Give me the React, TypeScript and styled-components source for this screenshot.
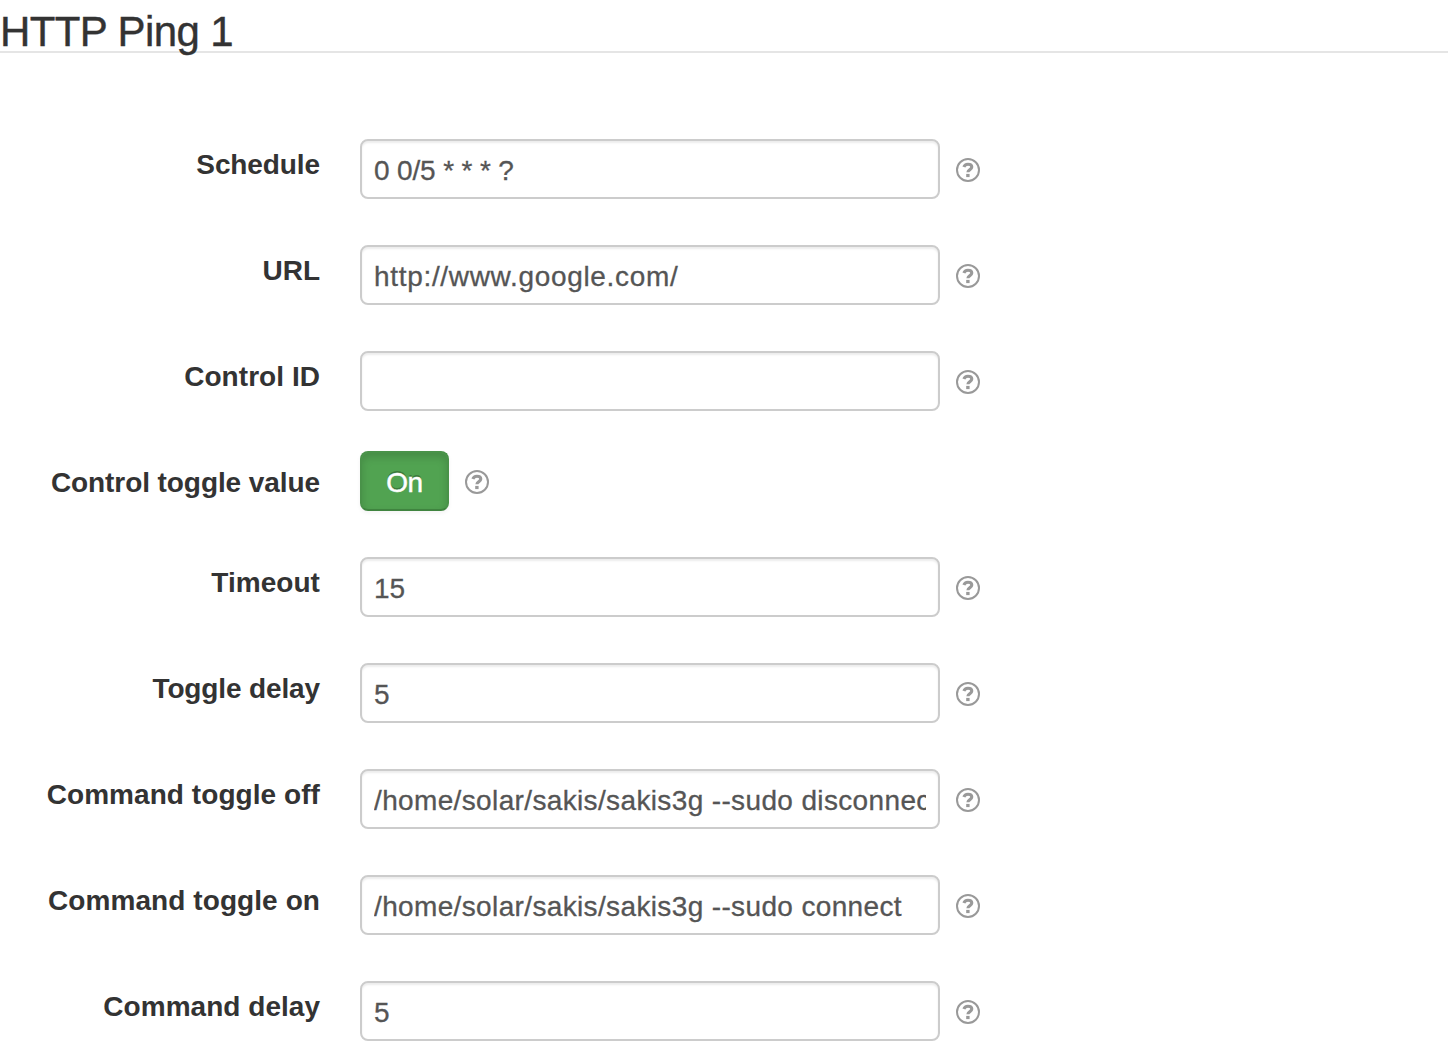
import React from "react";
import styled, { createGlobalStyle } from "styled-components";

const GlobalStyle = createGlobalStyle`
  * { box-sizing: border-box; }
  body {
    margin: 0;
    background: #fff;
    overflow: hidden;
    font-family: "Liberation Sans", Arial, sans-serif;
    color: #333;
  }
`;

const Page = styled.main`
  width: 1448px;
  height: 1061px;
  overflow: hidden;
`;

const Legend = styled.h1`
  margin: 0 0 86px;
  height: 53px;
  padding-top: 3px;
  border-bottom: 2px solid #e5e5e5;
  font-size: 42px;
  line-height: 58px;
  font-weight: 400;
  letter-spacing: -0.6px;
  white-space: nowrap;
  -webkit-text-stroke: 0.4px #333;
`;

const Form = styled.form`
  display: flex;
  flex-direction: column;
  gap: 46px;
`;

const Row = styled.div<{ $raised?: boolean }>`
  display: flex;
  align-items: flex-start;
  height: 60px;
  margin-top: ${(p) => (p.$raised ? -6 : 0)}px;
`;

const Label = styled.label<{ $drop?: number; $tracking: number }>`
  flex: none;
  width: 320px;
  margin-right: 40px;
  padding-top: ${(p) => p.$drop ?? 6}px;
  text-align: right;
  font-size: 28px;
  line-height: 40px;
  font-weight: 700;
  letter-spacing: ${(p) => p.$tracking}px;
  white-space: nowrap;
`;

const Input = styled.input<{ $tracking: number }>`
  flex: none;
  width: 580px;
  height: 60px;
  padding: 3px 12px 0;
  border: 2px solid #ccc;
  border-radius: 8px;
  background: #fff;
  box-shadow: inset 0 2px 2px rgba(0, 0, 0, 0.075);
  color: #555;
  font: 28px "Liberation Sans", Arial, sans-serif;
  letter-spacing: ${(p) => p.$tracking}px;
  -webkit-text-stroke: 0.3px #555;
  outline: none;
`;

const Toggle = styled.button`
  flex: none;
  width: 89px;
  height: 60px;
  padding: 3px 0 0;
  border: 2px solid;
  border-color: #499249 #499249 #3f843f;
  border-radius: 8px;
  background: #51a351;
  box-shadow: inset 0 4px 8px rgba(0, 0, 0, 0.15), 0 2px 4px rgba(0, 0, 0, 0.05);
  color: #fff;
  font: 28px "Liberation Sans", Arial, sans-serif;
  letter-spacing: -0.4px;
  -webkit-text-stroke: 0.5px #fff;
  text-shadow: 0 -2px 0 rgba(0, 0, 0, 0.25);
`;

const Help = styled.svg`
  flex: none;
  width: 24px;
  height: 24px;
  margin: 19px 0 0 16px;
`;

const HelpIcon = () => (
  <Help viewBox="0 0 24 24" fill="none">
    <circle cx="12" cy="12" r="11" stroke="#999" strokeWidth="2" />
    <path
      d="M7.9 9C8.5 7.1 9.9 6.3 11.9 6.3c2.3 0 3.9 1 3.9 2.8 0 2.6-3.9 2.4-3.9 5.2"
      stroke="#999"
      strokeWidth="3.1"
    />
    <path d="M10.2 15.9h3.4v3.2h-3.4z" fill="#999" />
  </Help>
);

type Field = {
  label: string;
  value: string;
  toggle?: boolean;
  labelTracking: number;
  valueTracking: number;
};

const fields: Field[] = [
  { label: "Schedule", value: "0 0/5 * * * ?", labelTracking: -0.1, valueTracking: -0.15 },
  { label: "URL", value: "http://www.google.com/", labelTracking: 0, valueTracking: 0.68 },
  { label: "Control ID", value: "", labelTracking: 0.05, valueTracking: 0 },
  { label: "Control toggle value", value: "On", toggle: true, labelTracking: -0.08, valueTracking: 0 },
  { label: "Timeout", value: "15", labelTracking: 0.05, valueTracking: 0 },
  { label: "Toggle delay", value: "5", labelTracking: -0.13, valueTracking: 0 },
  {
    label: "Command toggle off",
    value: "/home/solar/sakis/sakis3g --sudo disconnect",
    labelTracking: 0.06,
    valueTracking: 0.36,
  },
  {
    label: "Command toggle on",
    value: "/home/solar/sakis/sakis3g --sudo connect",
    labelTracking: 0.08,
    valueTracking: 0.36,
  },
  { label: "Command delay", value: "5", labelTracking: 0.03, valueTracking: 0 },
];

export default function App() {
  return (
    <Page>
      <GlobalStyle />
      <Legend>HTTP Ping 1</Legend>
      <Form>
        {fields.map((f) => (
          <Row key={f.label} $raised={f.toggle}>
            <Label $drop={f.toggle ? 12 : 6} $tracking={f.labelTracking}>
              {f.label}
            </Label>
            {f.toggle ? (
              <Toggle type="button">{f.value}</Toggle>
            ) : (
              <Input defaultValue={f.value} $tracking={f.valueTracking} />
            )}
            <HelpIcon />
          </Row>
        ))}
      </Form>
    </Page>
  );
}
